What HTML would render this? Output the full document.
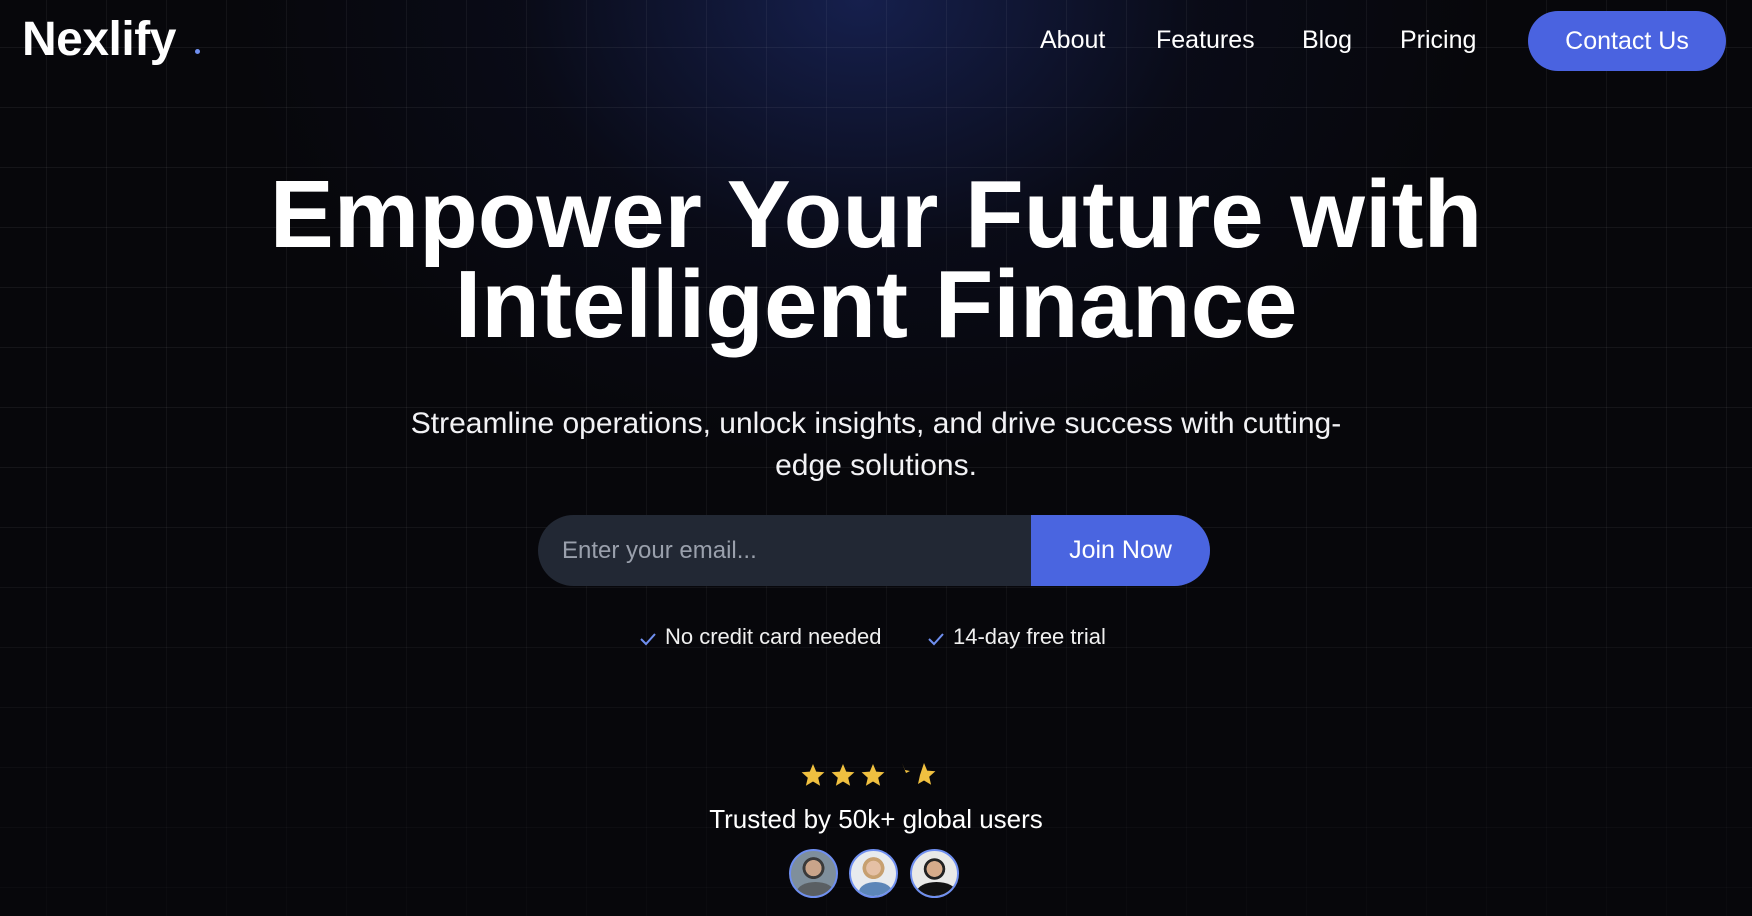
<!DOCTYPE html>
<html><head><meta charset="utf-8">
<style>
*{margin:0;padding:0;box-sizing:border-box}
html,body{width:1752px;height:916px;overflow:hidden}
body{background:#07070b;font-family:"Liberation Sans",sans-serif;color:#fff;position:relative}
.glow{position:absolute;left:0;top:0;width:1752px;height:916px;
background:radial-gradient(ellipse 620px 460px at 860px 0px,rgba(28,42,105,0.7),rgba(15,20,50,0.3) 55%,rgba(0,0,0,0) 100%)}
.grid{position:absolute;left:0;top:0;width:1752px;height:916px;
background-image:linear-gradient(rgba(255,255,255,0.06) 1px,transparent 1px),linear-gradient(90deg,rgba(255,255,255,0.05) 1px,transparent 1px);
background-size:60px 60px;background-position:46px 47px;
-webkit-mask-image:linear-gradient(#000 0%,#000 50%,rgba(0,0,0,0.35) 100%)}
.logo{position:absolute;left:22px;top:12px;font-size:48px;font-weight:bold;letter-spacing:-0.5px}
.dot{position:absolute;left:195px;top:49px;width:5px;height:5px;border-radius:50%;background:#6f8ff0}
.nav a{position:absolute;top:26px;font-size:25px;color:#fff;text-decoration:none}
.btn{position:absolute;left:1528px;top:11px;width:198px;height:60px;border-radius:30px;background:#4a63e0;font-size:25px;line-height:60px;text-align:center}
h1{position:absolute;left:0;width:1752px;top:170px;text-align:center;font-size:96px;line-height:90px;font-weight:bold;letter-spacing:0}
.sub{position:absolute;left:0;width:1752px;top:403px;text-align:center;font-size:30px;line-height:42px;color:#f2f2f5}
.form{position:absolute;left:538px;top:515px;width:672px;height:71px;border-radius:36px;background:#222834;overflow:hidden}
.form .ph{position:absolute;left:24px;top:0;line-height:71px;font-size:24px;color:#9aa0ac}
.form .jn{position:absolute;left:493px;top:0;width:179px;height:71px;background:#4a65e0;line-height:71px;text-align:center;font-size:25px}
.chk{position:absolute;top:624px;font-size:22px;color:#f0f0f0}
.chk svg{vertical-align:-2px;margin-right:8px}
.stars{position:absolute;left:800px;top:761px}
.trust{position:absolute;left:0;width:1752px;top:804px;text-align:center;font-size:26px}
.av{position:absolute;top:849px;width:49px;height:49px;border-radius:50%;border:2px solid #6f8ff0;overflow:hidden}
</style></head><body>
<div class="glow"></div>
<div class="grid"></div>
<div class="logo">Nexlify</div><div class="dot"></div>
<div class="nav">
<a style="left:1040px">About</a>
<a style="left:1156px">Features</a>
<a style="left:1302px">Blog</a>
<a style="left:1400px">Pricing</a>
</div>
<div class="btn">Contact Us</div>
<h1>Empower Your Future with<br>Intelligent Finance</h1>
<div class="sub">Streamline operations, unlock insights, and drive success with cutting-<br>edge solutions.</div>
<div class="form"><div class="ph">Enter your email...</div><div class="jn">Join Now</div></div>
<div class="chk" style="left:639px"><svg width="18" height="14" viewBox="0 0 18 14"><path d="M2 7l5 5L16 2" fill="none" stroke="#6f8ff0" stroke-width="2"/></svg>No credit card needed</div>
<div class="chk" style="left:927px"><svg width="18" height="14" viewBox="0 0 18 14"><path d="M2 7l5 5L16 2" fill="none" stroke="#6f8ff0" stroke-width="2"/></svg>14-day free trial</div>
<svg class="stars" width="150" height="28" viewBox="0 0 150 28">
<defs><path id="s" d="M12 1l3.2 7.6 8.2.7-6.2 5.4 1.9 8L12 18.5 4.9 22.7l1.9-8L.6 9.3l8.2-.7z" fill="#f0c040"/></defs>
<use href="#s" x="1" y="2"/><use href="#s" x="31" y="2"/><use href="#s" x="61" y="2"/>
<path d="M102 2l3 7 5 1-4 2z" fill="#f0c040"/>
<path d="M124 2l3.2 7.6 8.2.7-6.2 5.4 1.9 8L124 19.5 118 23l2-9z" fill="#f0c040"/>
</svg>
<div class="trust">Trusted by 50k+ global users</div>
<div class="av" style="left:789px;background:radial-gradient(circle at 50% 38%,#c9a48a 0 22%,#3a3a3a 23% 30%,#7f8f9c 31%);"><div style="position:absolute;bottom:-6px;left:6px;width:37px;height:20px;border-radius:50% 50% 0 0;background:#5a5f63"></div></div>
<div class="av" style="left:849px;background:radial-gradient(circle at 50% 38%,#e5c0a5 0 20%,#c7a070 21% 30%,#e8ebee 31%);"><div style="position:absolute;bottom:-6px;left:8px;width:33px;height:20px;border-radius:50% 50% 0 0;background:#5c86b8"></div></div>
<div class="av" style="left:910px;background:radial-gradient(circle at 50% 40%,#d6ab8a 0 22%,#222 23% 30%,#e9e9e7 31%);"><div style="position:absolute;bottom:-6px;left:5px;width:39px;height:20px;border-radius:50% 50% 0 0;background:#111"></div></div>
</body></html>
